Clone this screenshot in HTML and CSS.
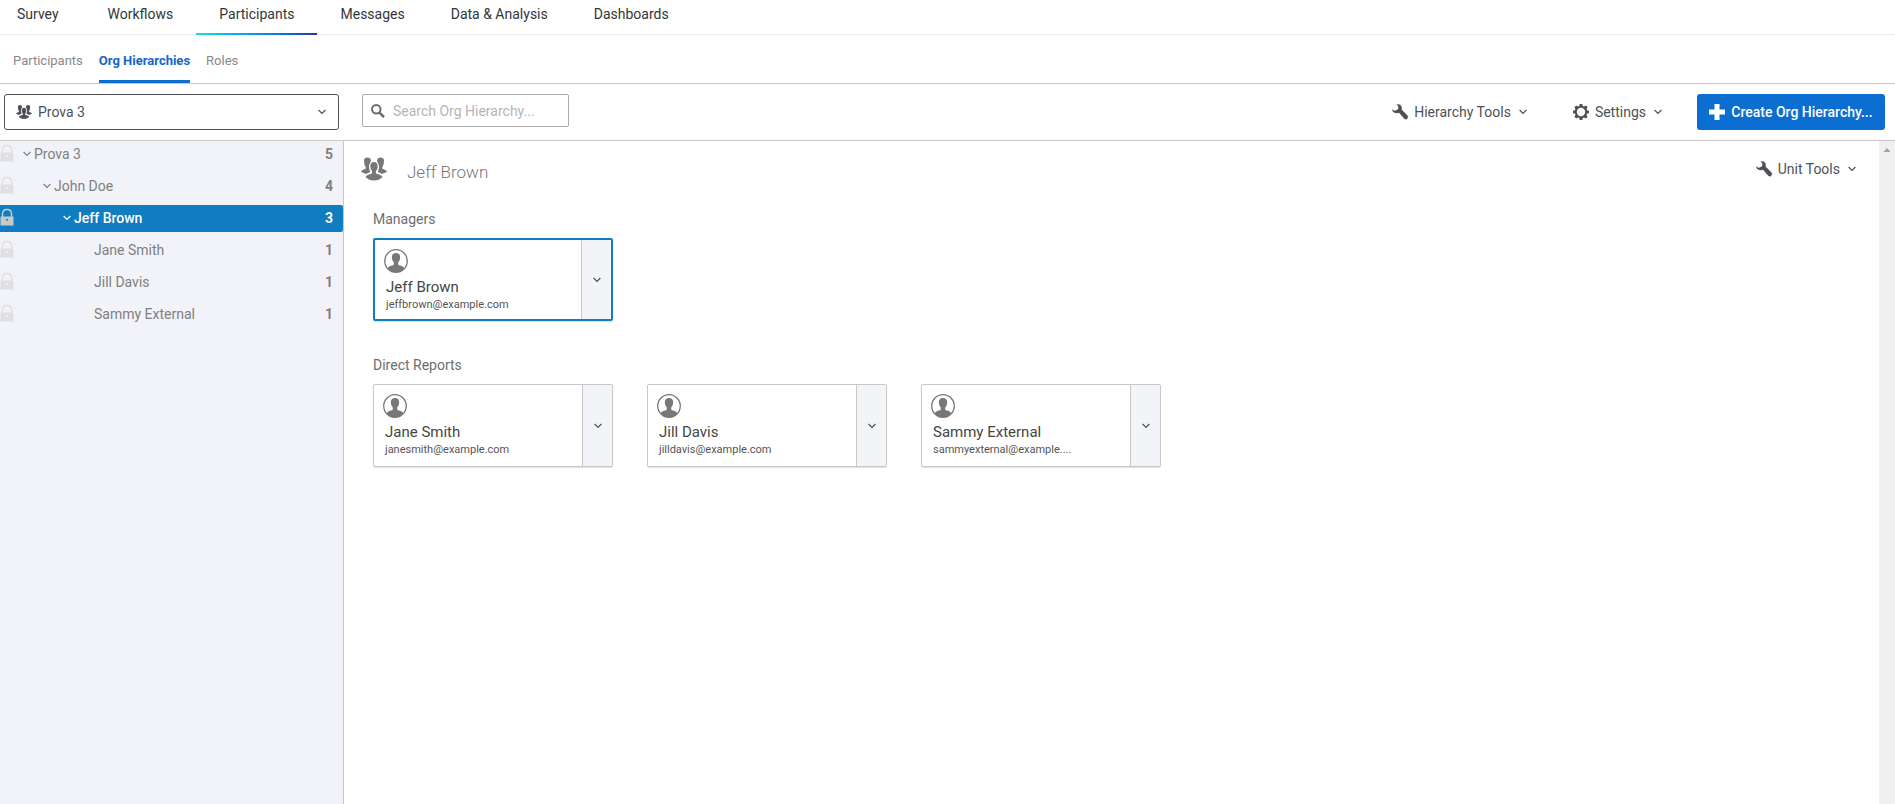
FILE: index.html
```html
<!DOCTYPE html>
<html lang="en">
<head>
<meta charset="utf-8">
<title>Org Hierarchies</title>
<link rel="stylesheet" href="styles.css">
</head>
<body>
<svg class="defs" aria-hidden="true">
  <symbol id="chevron" viewBox="0 0 8 6"><path d="M0.6 1 4 4.4 7.4 1" fill="none" stroke="currentColor" stroke-width="1.2"/></symbol>
  <symbol id="group" viewBox="0 0 26 23">
    <path d="M3 3Q3 0 6.500 0Q9.500 0 10 3L9.400 5Q7.600 7 8 10.500L9.200 14.500Q6 15.500 5.500 16.500L0 14.500Q.5 12.500 4.500 11.300Q5.200 10.500 4.300 9Q3 7 3 3ZM23 3Q23 0 19.500 0Q16.500 0 16 3L16.600 5Q18.400 7 18 10.500L16.800 14.500Q20 15.500 20.500 16.500L26 14.500Q25.500 12.500 21.500 11.300Q20.800 10.500 21.700 9Q23 7 23 3Z"/>
    <path d="M13 4.500Q16.700 4.500 16.700 9Q16.700 12 14.900 13.800V15.500Q15.500 16.700 18 17Q21 17.500 21.500 19.500Q18 23 13 23Q8 23 4.500 19.500Q5 17.500 8 17Q10.500 16.700 11.100 15.500V13.800Q9.300 12 9.300 9Q9.300 4.500 13 4.500Z"/>
  </symbol>
  <symbol id="person" viewBox="0 0 24 24">
    <circle cx="12" cy="12" r="11.300" fill="none" stroke="currentColor" stroke-width="1.300"/>
    <path d="M12 4Q16.200 4 16.200 8.500Q16.200 11.500 14.200 13.500V15.500Q14.500 16.300 17 16.700Q19.700 17.200 20.400 19.500Q17 23.300 12 23.300Q7 23.300 3.600 19.500Q4.300 17.200 7 16.700Q9.500 16.300 9.800 15.500V13.500Q7.800 11.500 7.800 8.500Q7.800 4 12 4Z"/>
  </symbol>
  <symbol id="lock" viewBox="0 0 14 17">
    <path d="M2.500 8.500V5.500Q2.500 1 7 1Q11.500 1 11.500 5.500V8.500" fill="none" stroke="currentColor" stroke-width="1.500"/>
    <path fill-rule="evenodd" d="M.5 8H13.500V17H.5ZM6 10.500V12H8V10.500Z"/>
  </symbol>
  <symbol id="wrench" viewBox="0 0 16 16">
    <path d="M4.300.5Q6.900-.4 8.700 1.300Q10.300 3 9.600 5.400L15.500 11.500Q16.300 12.600 15.600 14.200Q14.500 16.300 12.500 15L7 8.800Q4.400 9.800 2 8.500Q0 7.300.1 5Q1.300 6.700 3 6.800L5.700 5.600Q6.900 3.500 6 2.100Q5.500 1.100 4.300.5Z"/>
  </symbol>
  <symbol id="gear" viewBox="0 0 16 16">
    <circle cx="8" cy="8" r="5.200" fill="none" stroke="currentColor" stroke-width="2"/>
    <path d="M6.700 0H9.300L9.800 2.500H6.200ZM6.700 16H9.300L9.800 13.500H6.200ZM0 6.700V9.300L2.500 9.800V6.200ZM16 6.700V9.300L13.500 9.800V6.200ZM1.400 3.200 3.200 1.400 5.400 2.800 2.800 5.400ZM14.600 3.200 12.800 1.400 10.600 2.800 13.200 5.400ZM1.400 12.800 3.200 14.600 5.400 13.200 2.800 10.600ZM14.600 12.800 12.800 14.600 10.600 13.200 13.200 10.600Z"/>
  </symbol>
  <symbol id="search" viewBox="0 0 14 14"><circle cx="5.300" cy="5.300" r="4.200" fill="none" stroke="currentColor" stroke-width="2"/><path d="M8 8.200 13 13.200" stroke="currentColor" stroke-width="2.500"/></symbol>
  <symbol id="plus" viewBox="0 0 16 16"><path d="M5.500 0h5v5.500H16v5h-5.500V16h-5v-5.500H0v-5h5.500z"/></symbol>
</svg>

<nav class="main-nav" aria-label="Project">
  <a href="#">Survey</a>
  <a href="#">Workflows</a>
  <a href="#" class="active" aria-current="page">Participants</a>
  <a href="#">Messages</a>
  <a href="#">Data &amp; Analysis</a>
  <a href="#">Dashboards</a>
</nav>

<nav class="sub-nav" aria-label="Participants">
  <a href="#">Participants</a>
  <a href="#" class="active" aria-current="page">Org Hierarchies</a>
  <a href="#">Roles</a>
</nav>

<div class="toolbar">
  <div class="picker">
    <svg class="icon-sm"><use href="#group"/></svg>
    <select aria-label="Hierarchy"><option>Prova 3</option></select>
    <svg class="chevron"><use href="#chevron"/></svg>
  </div>
  <label class="search">
    <svg class="icon-search"><use href="#search"/></svg>
    <input type="text" placeholder="Search Org Hierarchy..." aria-label="Search Org Hierarchy">
  </label>
  <div class="actions">
    <button class="tool" type="button"><svg class="icon-sm"><use href="#wrench"/></svg>Hierarchy Tools<svg class="chevron"><use href="#chevron"/></svg></button>
    <button class="tool" type="button"><svg class="icon-sm"><use href="#gear"/></svg>Settings<svg class="chevron"><use href="#chevron"/></svg></button>
    <button class="create" type="button"><svg class="icon-sm"><use href="#plus"/></svg>Create Org Hierarchy...</button>
  </div>
</div>

<div class="workspace">
  <aside class="tree">
    <ul>
      <li class="node"><svg class="lock"><use href="#lock"/></svg><svg class="chevron"><use href="#chevron"/></svg><span class="label">Prova 3</span><b>5</b></li>
      <li class="node level-2"><svg class="lock"><use href="#lock"/></svg><svg class="chevron"><use href="#chevron"/></svg><span class="label">John Doe</span><b>4</b></li>
      <li class="node level-3 selected"><svg class="lock"><use href="#lock"/></svg><svg class="chevron"><use href="#chevron"/></svg><span class="label">Jeff Brown</span><b>3</b></li>
      <li class="node level-4"><svg class="lock"><use href="#lock"/></svg><span class="label">Jane Smith</span><b>1</b></li>
      <li class="node level-4"><svg class="lock"><use href="#lock"/></svg><span class="label">Jill Davis</span><b>1</b></li>
      <li class="node level-4"><svg class="lock"><use href="#lock"/></svg><span class="label">Sammy External</span><b>1</b></li>
    </ul>
  </aside>

  <main class="unit">
    <header class="unit-head">
      <svg class="icon-lg"><use href="#group"/></svg>
      <h1>Jeff Brown</h1>
      <button class="tool" type="button"><svg class="icon-sm"><use href="#wrench"/></svg>Unit Tools<svg class="chevron"><use href="#chevron"/></svg></button>
    </header>

    <section>
      <h2>Managers</h2>
      <div class="cards">
        <article class="card manager">
          <div class="info"><svg class="avatar"><use href="#person"/></svg><h3>Jeff Brown</h3><p>jeffbrown@example.com</p></div>
          <button type="button" aria-label="Jeff Brown options"><svg class="chevron"><use href="#chevron"/></svg></button>
        </article>
      </div>
    </section>

    <section>
      <h2>Direct Reports</h2>
      <div class="cards">
        <article class="card">
          <div class="info"><svg class="avatar"><use href="#person"/></svg><h3>Jane Smith</h3><p>janesmith@example.com</p></div>
          <button type="button" aria-label="Jane Smith options"><svg class="chevron"><use href="#chevron"/></svg></button>
        </article>
        <article class="card">
          <div class="info"><svg class="avatar"><use href="#person"/></svg><h3>Jill Davis</h3><p>jilldavis@example.com</p></div>
          <button type="button" aria-label="Jill Davis options"><svg class="chevron"><use href="#chevron"/></svg></button>
        </article>
        <article class="card">
          <div class="info"><svg class="avatar"><use href="#person"/></svg><h3>Sammy External</h3><p>sammyexternal@example....</p></div>
          <button type="button" aria-label="Sammy External options"><svg class="chevron"><use href="#chevron"/></svg></button>
        </article>
      </div>
    </section>
  </main>

  <div class="scroll-track" aria-hidden="true"><svg viewBox="0 0 16 16"><path d="M4.500 11 8 7l3.500 4z"/></svg></div>
</div>
</body>
</html>
```

FILE: styles.css
```css
* {
  box-sizing: border-box;
}

body {
  margin: 0;
  min-height: 100vh;
  display: flex;
  flex-direction: column;
  background: #fff;
  color: #4d5157;
  font: 14px/20px Roboto, "Liberation Sans", sans-serif;
}

h1, h2, h3, p, ul {
  margin: 0;
  padding: 0;
  font-weight: 400;
}

a {
  color: inherit;
  text-decoration: none;
}

button, input, select {
  margin: 0;
  padding: 0;
  border: 0;
  background: none;
  color: inherit;
  font: inherit;
}

svg {
  display: block;
  flex: none;
  fill: currentColor;
}

.defs {
  position: absolute;
  width: 0;
  height: 0;
}

.icon-sm {
  width: 16px;
  height: 16px;
}

.icon-lg {
  width: 26px;
  height: 24px;
}

.icon-search {
  width: 14px;
  height: 14px;
  color: #6b6b6b;
}

.chevron {
  width: 8px;
  height: 6px;
}

/* Top navigation */

.main-nav {
  display: flex;
  height: 35px;
  padding-right: 24px;
  border-bottom: 1px solid #ebebeb;
  color: #32363a;
}

.main-nav a {
  height: 35px;
  padding: 4px 23px 0;
}

.main-nav a:first-child {
  padding: 4px 26px 0 17px;
}

.main-nav .active {
  border-bottom: 2px solid;
  border-image: linear-gradient(90deg, #21dbd6, #05aef0 35%, #0a6ed1 75%, #30309c) 1;
}

.sub-nav {
  display: flex;
  gap: 16px;
  height: 49px;
  padding-left: 13px;
  border-bottom: 1px solid #c8c8c8;
  color: #888;
  font-size: 13px;
}

.sub-nav a {
  padding-top: 16px;
}

.sub-nav .active {
  border-bottom: 3px solid #0b6ed0;
  color: #1565cb;
  font-weight: 700;
}

/* Toolbar */

.toolbar {
  display: flex;
  align-items: flex-start;
  padding: 10px 10px 10px 4px;
  border-bottom: 1px solid #c8c8c8;
}

.picker {
  display: grid;
  grid-template-columns: 34px 1fr 20px;
  align-items: center;
  width: 335px;
  height: 36px;
  border: 1px solid #4d5157;
  border-radius: 3px;
}

.picker svg {
  grid-row: 1;
  pointer-events: none;
}

.picker .icon-sm {
  grid-column: 1;
  margin-left: 11px;
}

.picker .chevron {
  grid-column: 3;
}

.picker select {
  grid-row: 1;
  grid-column: 1 / -1;
  height: 34px;
  padding-left: 33px;
  appearance: none;
}

.search {
  display: flex;
  align-items: center;
  gap: 8px;
  width: 207px;
  height: 33px;
  margin-left: 23px;
  padding-left: 8px;
  border: 1px solid #aaa;
  border-radius: 2px;
}

.search input {
  flex: 1;
  min-width: 0;
  outline: 0;
}

.search input::placeholder {
  color: #b5b5b5;
}

.actions {
  display: flex;
  align-items: center;
  gap: 35px;
  margin-left: auto;
}

.tool {
  display: flex;
  align-items: center;
  gap: 6px;
}

.tool .chevron {
  margin: 0 10px 0 2px;
}

.actions .tool .chevron {
  margin-right: 11px;
}

.create {
  display: flex;
  align-items: center;
  justify-content: center;
  gap: 6px;
  width: 188px;
  height: 36px;
  margin-left: -11px;
  border-radius: 3px;
  background: #0b6ed0;
  color: #fff;
  font-weight: 500;
}

/* Hierarchy tree */

.workspace {
  display: flex;
  flex: 1;
}

.tree {
  width: 344px;
  border-right: 1px solid #c8c8c8;
  background: #f2f3f8;
  color: #808080;
}

.tree ul {
  display: grid;
  gap: 5px;
  list-style: none;
}

.node {
  display: flex;
  align-items: center;
  gap: 3px;
  height: 27px;
  padding: 0 10px 2px 0;
}

.lock {
  width: 14px;
  height: 18px;
  margin: 0 6px 2px 0;
  color: #e0e0e0;
}

.level-2 .lock {
  margin-right: 26px;
}

.level-3 .lock {
  margin-right: 46px;
}

.level-4 .lock {
  margin-right: 77px;
}

.node .label {
  flex: 1;
}

.selected {
  border-radius: 0 2px 2px 0;
  background: #107dc0;
  color: #fff;
}

.selected .lock {
  color: #c8c8c8;
}

.selected .label {
  font-weight: 500;
}

/* Selected unit */

.unit {
  flex: 1;
  padding: 13px 13px 0 17px;
}

.unit-head {
  display: flex;
  align-items: center;
  color: #777;
}

.unit-head h1 {
  flex: 1;
  margin-left: 20px;
  padding-top: 6px;
  font-size: 17px;
  font-weight: 300;
  line-height: 24px;
}

.unit-head .tool {
  color: #4d5157;
}

.unit section {
  padding: 25px 0 9px 12px;
}

h2 {
  color: #6e6e6e;
  font-size: 14px;
}

.cards {
  display: flex;
  flex-wrap: wrap;
  gap: 34px;
  margin-top: 9px;
}

.card {
  display: flex;
  width: 240px;
  height: 83px;
  border: 1px solid #c8c8c8;
  border-radius: 2px;
  box-shadow: 0 1px 1px rgba(0, 0, 0, 0.12);
}

.card.manager {
  border: 2px solid #107dc0;
}

.info {
  flex: 1;
  min-width: 0;
  padding: 9px 0 0 9px;
}

.info h3,
.info p {
  padding-left: 2px;
}

.info h3 {
  margin-top: 4px;
  color: #454545;
  font-size: 15px;
}

.info p {
  color: #555;
  font-size: 11px;
  line-height: 16px;
}

.avatar {
  width: 24px;
  height: 24px;
  color: #777;
}

.card button {
  display: grid;
  place-items: center;
  width: 30px;
  border-left: 1px solid #c8c8c8;
  background: #f3f4f7;
}

.scroll-track {
  width: 16px;
  background: #f0f0f0;
  color: #a3a3a3;
}
```
